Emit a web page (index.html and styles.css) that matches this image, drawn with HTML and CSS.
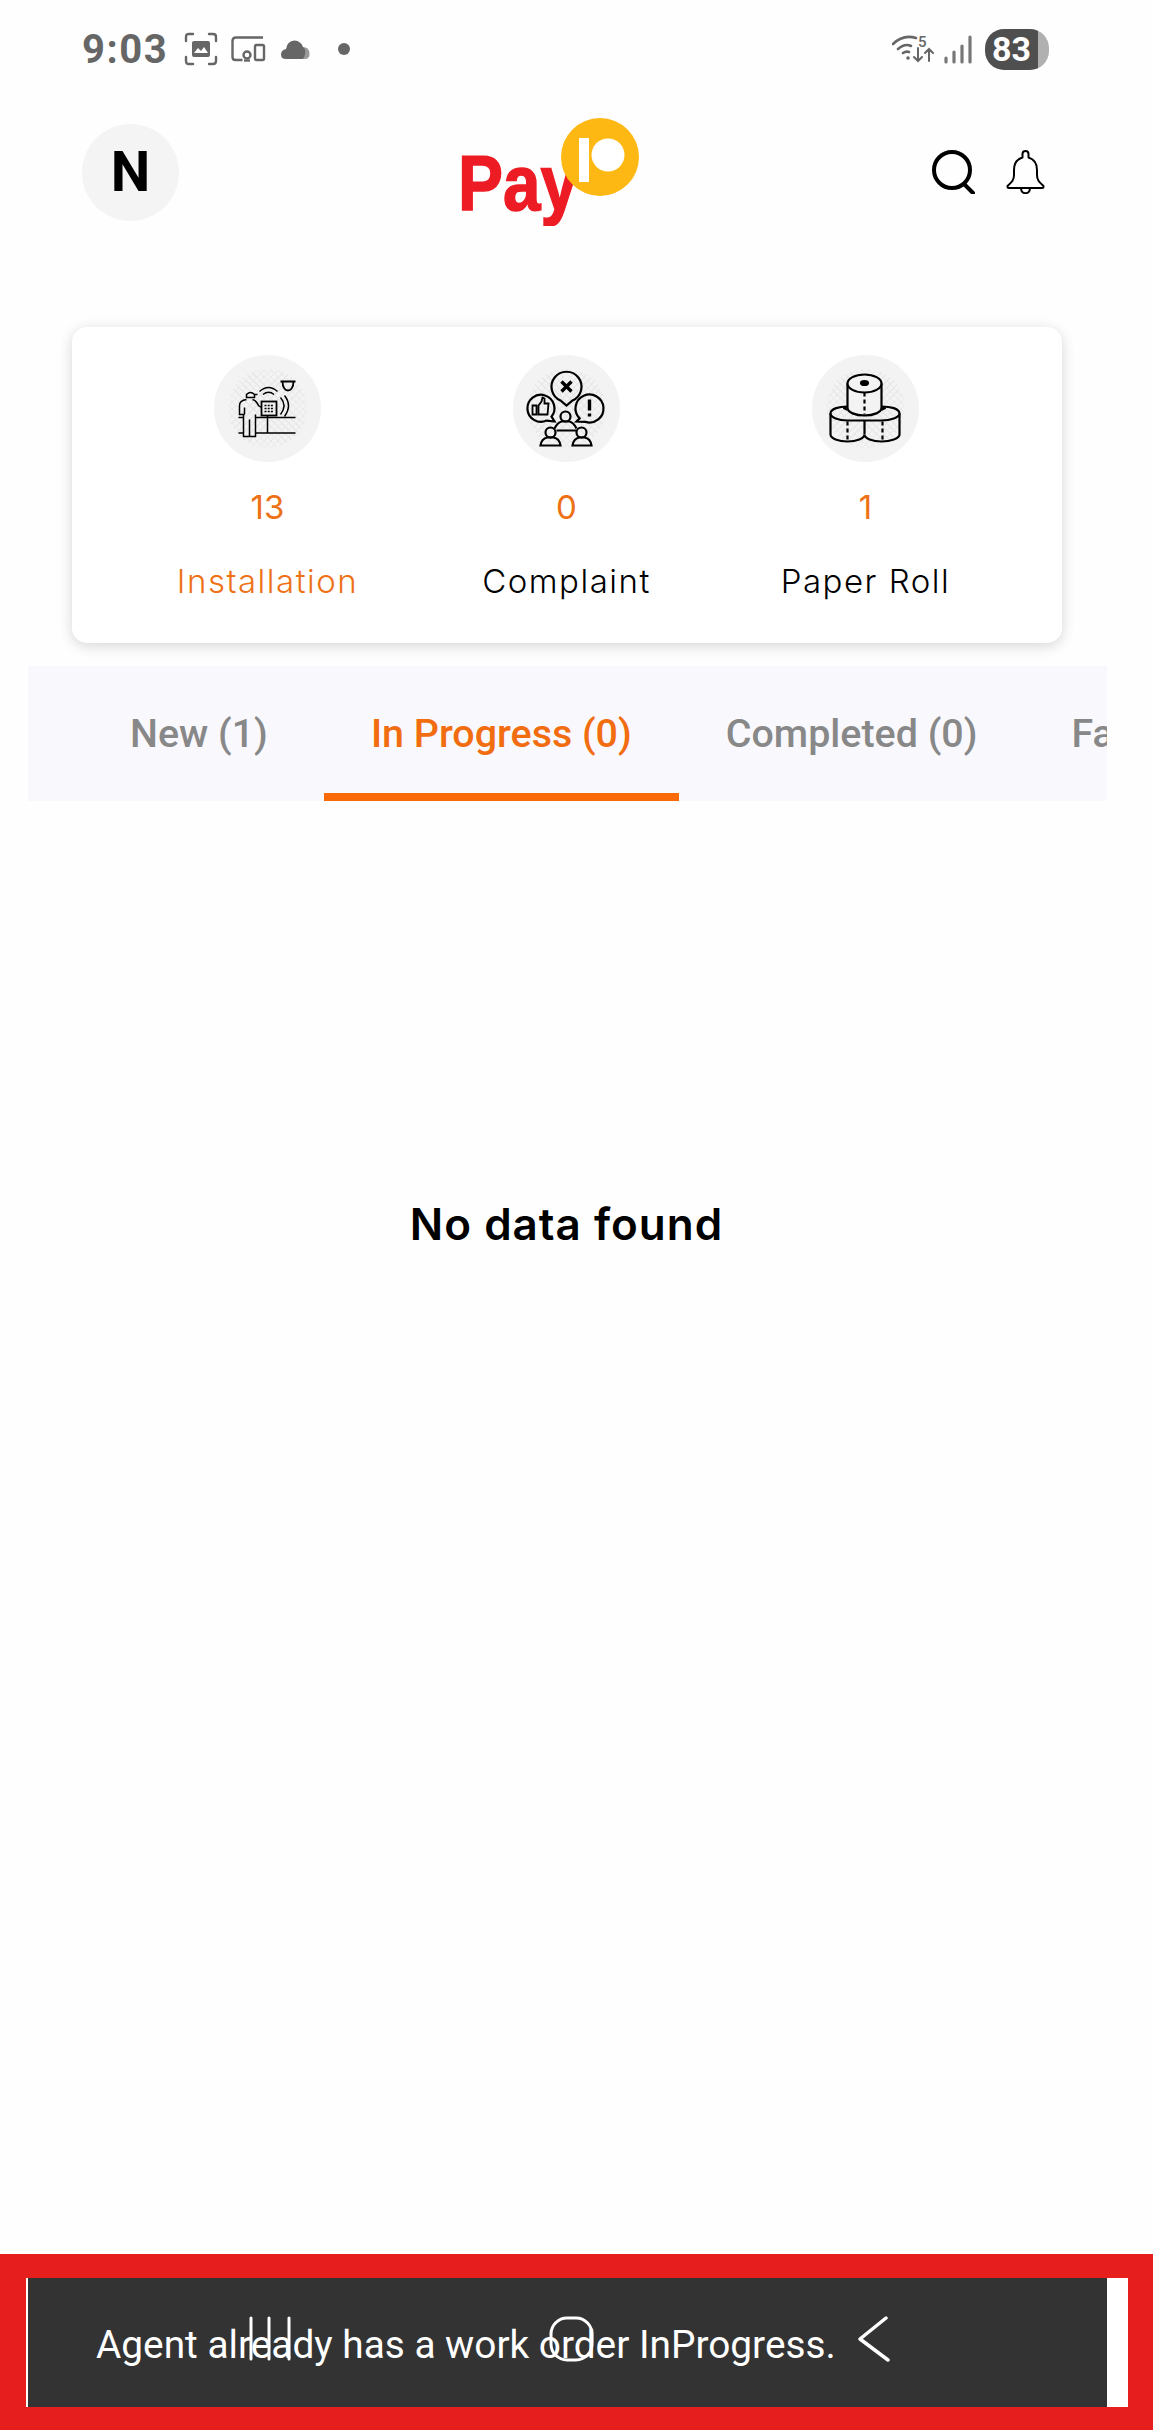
FILE: index.html
```html
<!DOCTYPE html>
<html lang="en">
<head>
    <meta charset="UTF-8">
    <meta name="viewport" content="width=device-width, initial-scale=1.0">
    <title>PayIO</title>
    <link rel="stylesheet" href="styles.css">
</head>
<body>
<div class="page">
    <div class="status-bar">
        <span class="clock">9:03</span>
        <svg class="ic-scan" width="34" height="34" viewBox="0 0 34 34" fill="none" stroke="#666" stroke-width="2.4" stroke-linecap="round">
            <path d="M2 9V5q0-3 3-3h4M25 2h4q3 0 3 3v4M32 25v4q0 3-3 3h-4M9 32H5q-3 0-3-3v-4"/>
            <path fill="#666" stroke="none" d="M10 9h14q2 0 2 2v12q0 2-2 2H10q-2 0-2-2V11q0-2 2-2z"/>
            <path fill="#fff" stroke="none" d="M10 21l4-5 3 3 3-4 4 6z"/>
        </svg>
        <svg class="ic-devices" width="35" height="26" viewBox="0 0 35 26" fill="none" stroke="#666" stroke-width="2.4">
            <path d="M32 1.5H5Q1.5 1.500 1.500 5v16q0 3 3 3h7"/>
            <rect x="24" y="9" width="9" height="15" rx="1.500"/>
            <circle cx="16" cy="19" r="3.500"/>
            <path d="M13 24.500h6"/>
        </svg>
        <svg class="ic-cloud" width="29" height="19" viewBox="0 0 29 19">
            <path fill="#999" d="M22 7q6 0 6.500 6t-5 6H16z"/>
            <path fill="#666" d="M5 19q-5 0-5-4.500T5 9q1-8 8.500-8.500Q20 1 22 7q3 2 2 7t-3 5z"/>
        </svg>
        <span class="status-dot"></span>
        <span class="status-spacer"></span>
        <svg class="ic-wifi" width="42" height="30" viewBox="0 0 42 30" fill="none" stroke="#666" stroke-width="2.600" stroke-linecap="round">
            <path d="M1 10Q11 0 24 4M6 15q7-6 13-3M11 19q3-2 6-1"/>
            <circle cx="16" cy="24" r="1.800" fill="#666" stroke="none"/>
            <path stroke-width="2" d="M26 14v13M22 23l4 4 4-4M37 27V15M33 19l4-4 4 4"/>
            <text class="wifi-five" x="26" y="13">5</text>
        </svg>
        <svg class="ic-signal" width="28" height="29" viewBox="0 0 28 29" stroke="#777" stroke-width="3.200" stroke-linecap="round">
            <path d="M2 23v4M10 17v10M18 11v16M26 2v25"/>
        </svg>
        <span class="battery"><span class="battery-num">83</span></span>
    </div>

    <div class="top-bar">
        <div class="avatar">N</div>
        <svg class="logo" width="182" height="108" viewBox="-4 0 182 108">
            <text class="logo-text" x="-3" y="92" textLength="120" lengthAdjust="spacingAndGlyphs">Pay</text>
            <circle cx="139" cy="39" r="39" fill="#fdb813"/>
            <rect x="118" y="20" width="10" height="44" fill="#fff"/>
            <circle cx="147" cy="37" r="16.500" fill="#fff"/>
        </svg>
        <div class="top-actions">
            <svg width="44" height="44" viewBox="0 0 44 44" fill="none" stroke="#000" stroke-width="4" stroke-linecap="round">
                <circle cx="21" cy="20" r="18"/>
                <path d="M33 34l9 9"/>
            </svg>
            <svg width="39" height="44" viewBox="0 0 39 44" fill="none" stroke="#000" stroke-width="2" stroke-linejoin="round">
                <path d="M19.500 1c-2 0-3 1.500-3 3v3.500C10 9.500 8 14 8 20v5c0 5-2 7-6 10.500-1 1-.5 2.500 1 2.500h33c1.500 0 2-1.500 1-2.500C33 32 31 30 31 25v-5c0-6-2-10.500-8.500-12.500V4c0-1.500-1-3-3-3z"/>
                <path d="M15 38c0 7 9 7 9 0"/>
            </svg>
        </div>
    </div>

    <div class="stats-card">
        <div class="stat">
            <div class="stat-icon">
                <svg width="107" height="107" viewBox="9.500 9.500 107 107" fill="none" stroke="#000" stroke-width="1.500">
                    <path d="M76 36h15M78 36c0 12 11 12 11 0" stroke-width="1.800"/>
                    <path d="M55 46q9-8 18 0M58.500 49q5.500-4.500 11 0"/>
                    <rect x="57" y="56" width="15" height="14" stroke-width="1.800"/>
                    <path d="M60 60h9M60 63h9M60 66h9" stroke-dasharray="2 1.200"/>
                    <path d="M76 52q7 8 0 17M80 50q8 10 0 21"/>
                    <path d="M42 49q4-4 8 0v3h-8zM50 49h3"/>
                    <path d="M42 54q-7 1-7 6v9h5M48 54q4 1 6 6l3 2M40 62v7M39 69v22h12V69M45 74v17"/>
                    <path d="M51 72h40M34 72h5M34 87.500h5M51 87.500h40M63 70v17.500"/>
                </svg>
            </div>
            <div class="stat-num">13</div>
            <div class="stat-label active">Installation</div>
        </div>
        <div class="stat">
            <div class="stat-icon">
                <svg width="107" height="107" viewBox="9.500 9.500 107 107" fill="none" stroke="#000" stroke-width="2.200">
                    <path d="M57 55a15 15 0 1 1 12 0l-6 5z"/>
                    <path d="M58 36l10 10M68 36L58 46" stroke-width="3.400"/>
                    <path d="M48 71.200A13.500 13.500 0 1 0 43 75.100L51 76z"/>
                    <path d="M29 60h4v9h-4zM35 60l3-4 1-4 2 1v5h4l-1 11h-9z" stroke-width="1.800"/>
                    <path d="M82 76.400A14 14 0 1 0 76.100 72.900L73 76z"/>
                    <path d="M86 54v11M86 68v3" stroke-width="3.400"/>
                    <circle cx="62" cy="71" r="5"/>
                    <path d="M51 83q3-6 7-7h8q4 1 7 7M53 85h20"/>
                    <circle cx="47" cy="87" r="5"/>
                    <path d="M37 100q1-7 7-8h6q6 1 7 8z"/>
                    <circle cx="78" cy="87" r="5"/>
                    <path d="M69 100q1-7 7-8h5q6 1 7 8z"/>
                </svg>
            </div>
            <div class="stat-num">0</div>
            <div class="stat-label">Complaint</div>
        </div>
        <div class="stat">
            <div class="stat-icon">
                <svg width="107" height="107" viewBox="9.500 9.500 107 107" fill="none" stroke="#000" stroke-width="2.200">
                    <path d="M45 61c-8 0-17 2-17 7v21c0 4 8 7 17 7s17-3 17-7c0 4 8 7 17 7s18-3 18-7V68c0-5-9-7-18-7"/>
                    <path d="M28 68c0 4 8 7 17 7h17M62 75h17c9 0 18-3 18-7M62 75v14"/>
                    <path d="M45 76v19M80 76v19" stroke-dasharray="4 3"/>
                    <path d="M45 38v24c0 5 8 8 17 8s17-3 17-8V38" fill="#f3f3f3"/>
                    <ellipse cx="62" cy="38" rx="17" ry="9" fill="#f3f3f3"/>
                    <ellipse cx="62" cy="37.500" rx="3.500" ry="2" fill="#000"/>
                    <path d="M62 47v22" stroke-dasharray="4 3"/>
                    <path d="M41 62l4 2M83 62l-4 2" stroke-width="3"/>
                </svg>
            </div>
            <div class="stat-num">1</div>
            <div class="stat-label">Paper Roll</div>
        </div>
    </div>

    <div class="tabs">
        <div class="tab">New (1)</div>
        <div class="tab active">In Progress (0)</div>
        <div class="tab">Completed (0)</div>
        <div class="tab">Failed (0)</div>
    </div>

    <div class="empty">No data found</div>

    <div class="footer">
        <div class="toast-wrap">
            <div class="toast">Agent already has a work order InProgress.</div>
            <svg class="nav-keys" width="644" height="46" viewBox="0 0 644 46" fill="none" stroke="#fff" stroke-width="3" stroke-linecap="round" stroke-linejoin="round">
                <path d="M2 2v41M20 2v41M40 2v41"/>
                <rect x="302" y="2" width="41" height="42" rx="16"/>
                <path d="M637 2l-26 21 28 21" stroke-width="3.500"/>
            </svg>
        </div>
    </div>
</div>
</body>
</html>
```

FILE: styles.css
```css
html, body {
    margin: 0;
    padding: 0;
}
body {
    background: #fefefe;
    font-family: Inter, sans-serif;
}
.page {
    height: 2432px;
    display: flex;
    flex-direction: column;
    overflow: hidden;
}

/* status bar */
.status-bar {
    height: 98px;
    display: flex;
    align-items: center;
    padding: 0 104px 0 82px;
    flex-shrink: 0;
}
.clock {
    font-family: Roboto, sans-serif;
    font-weight: 700;
    font-size: 40px;
    letter-spacing: 1.5px;
    color: #666;
    width: 102px;
}
.ic-devices {
    margin-left: 13px;
}
.ic-cloud {
    margin-left: 15px;
}
.status-dot {
    width: 12px;
    height: 12px;
    border-radius: 50%;
    background: #666;
    margin-left: 28px;
}
.status-spacer {
    flex: 1;
}
.ic-signal {
    margin-left: 10px;
}
.wifi-five {
    font-family: Roboto, sans-serif;
    font-size: 15px;
    font-weight: 500;
    fill: #666;
    stroke: none;
}
.battery {
    width: 64px;
    height: 41px;
    margin-left: 13px;
    border-radius: 19px;
    background: linear-gradient(90deg, #4f4f4f 53px, #b0b0b0 53px);
    display: flex;
    align-items: center;
}
.battery-num {
    width: 53px;
    text-align: center;
    font-family: Roboto, sans-serif;
    font-weight: 700;
    font-size: 34px;
    color: #fff;
}

/* top bar */
.top-bar {
    display: flex;
    align-items: flex-start;
    padding: 20px 108px 0 82px;
    flex-shrink: 0;
}
.avatar {
    width: 97px;
    height: 97px;
    margin-top: 6px;
    border-radius: 50%;
    background: #f4f4f4;
    font-family: Roboto, sans-serif;
    font-weight: 700;
    font-size: 56px;
    line-height: 97px;
    text-align: center;
    color: #000;
}
.logo {
    margin-left: 278px;
}
.logo-text {
    font-family: "Liberation Sans", sans-serif;
    font-weight: 700;
    font-size: 77px;
    fill: #ed1c24;
    stroke: #ed1c24;
    stroke-width: 1.5px;
}
.top-actions {
    margin-left: auto;
    margin-top: 32px;
    display: flex;
    gap: 31px;
}

/* counters card */
.stats-card {
    margin: 0 91px 0 72px;
    margin-top: 101px;
    height: 316px;
    box-sizing: border-box;
    padding: 28px 44px 0 46px;
    display: grid;
    grid-template-columns: repeat(3, 299px);
    background: #fff;
    border-radius: 15px;
    box-shadow: 0 3px 14px rgba(0, 0, 0, 0.16);
    flex-shrink: 0;
}
.stat {
    display: flex;
    flex-direction: column;
    align-items: center;
}
.stat-icon {
    width: 107px;
    height: 107px;
    box-sizing: border-box;
    padding: 14px;
    border-radius: 50%;
    background-image:
        repeating-linear-gradient(45deg, #e8e8e8 0 1px, transparent 1px 5px),
        repeating-linear-gradient(-45deg, #e8e8e8 0 1px, transparent 1px 5px),
        linear-gradient(#f3f3f3, #f3f3f3);
    background-clip: content-box, content-box, border-box;
    background-origin: content-box, content-box, border-box;
}
.stat-icon svg {
    display: block;
    margin: -14px;
}
.stat-num {
    margin-top: 25px;
    font-size: 33px;
    line-height: 40px;
    color: #ee7116;
}
.stat-label {
    margin-top: 33px;
    font-size: 33px;
    font-weight: 300;
    line-height: 42px;
    letter-spacing: 1.5px;
    color: #000;
    white-space: nowrap;
}
.stat-label.active {
    color: #ee7116;
}

/* tabs */
.tabs {
    margin: 23px 46px 0 28px;
    height: 135px;
    display: flex;
    padding-left: 55px;
    background: #f8f8fd;
    overflow: hidden;
    flex-shrink: 0;
}
.tab {
    padding: 0 47px;
    font-family: Roboto, sans-serif;
    font-weight: 500;
    font-size: 39.4px;
    line-height: 135px;
    color: #888;
    white-space: nowrap;
}
.tab:first-child {
    margin-right: 9px;
}
.tab.active {
    color: #f26c10;
    box-shadow: inset 0 -8px 0 #fb6a09;
}

/* empty state */
.empty {
    flex: 1;
    padding: 393px 20px 0 0;
    font-size: 44px;
    font-weight: 600;
    line-height: 60px;
    letter-spacing: 1px;
    text-align: center;
    color: #000;
}

/* toast over the red frame */
.footer {
    height: 176px;
    margin-bottom: 2px;
    box-sizing: border-box;
    padding: 24px 25px 23px 26px;
    background: #e61e1e;
    flex-shrink: 0;
}
.toast-wrap {
    position: relative;
    height: 100%;
    background: #fff;
    padding: 0 21px 0 2px;
}
.toast {
    height: 100%;
    box-sizing: border-box;
    padding: 42px 0 0 68px;
    background: #333;
    font-family: Roboto, sans-serif;
    font-size: 38.8px;
    line-height: 50px;
    color: #fff;
}
.nav-keys {
    position: absolute;
    left: 223px;
    top: 38px;
}
```
